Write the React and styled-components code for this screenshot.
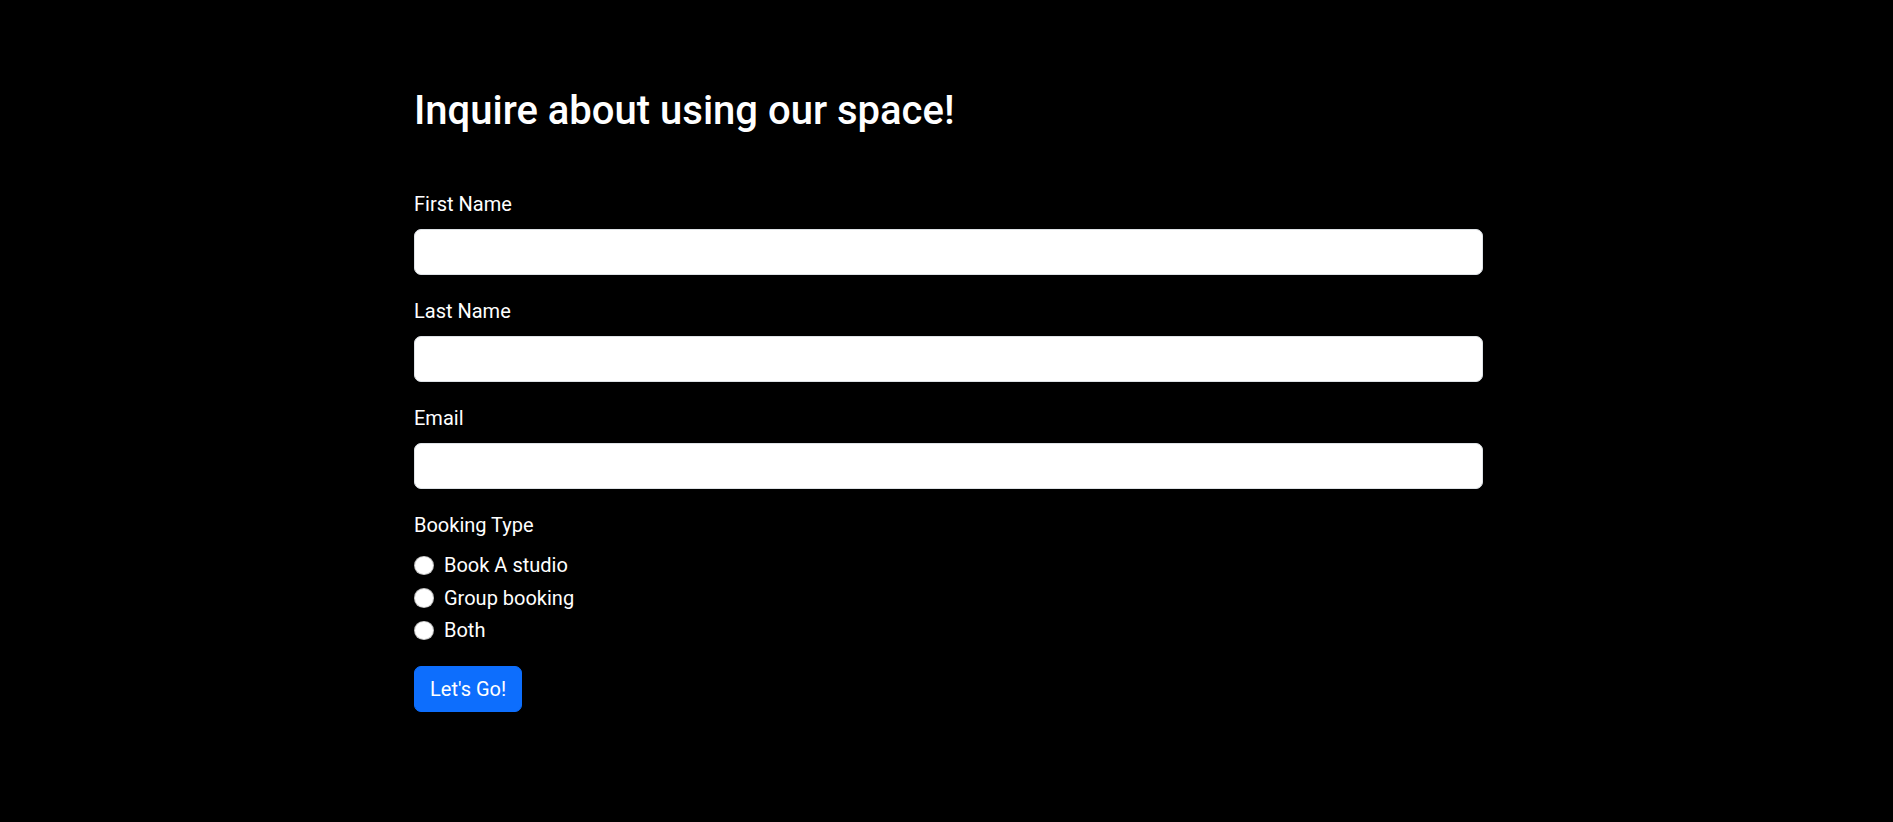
import React from "react";
import styled, { createGlobalStyle } from "styled-components";

const Global = createGlobalStyle`
  html, body { margin: 0; padding: 0; background: #000; }
  body { font-family: Roboto, "Noto Sans", "Liberation Sans", sans-serif; color: #fff; }
  * { box-sizing: border-box; }
`;

const Page = styled.div`
  min-height: 822px;
  background: #000;
`;

const Wrapper = styled.main`
  width: 1073px;
  margin: 0 auto;
  padding: 87px 0 0 4px;
`;

const Title = styled.h2`
  margin: 0 0 54px;
  font-size: 40px;
  line-height: 48px;
  font-weight: 500;
  color: #fff;
`;

const Form = styled.form`
  display: flex;
  flex-direction: column;
`;

const Group = styled.div`
  display: flex;
  flex-direction: column;
  margin-bottom: ${(p) => p.$mb || 21}px;
`;

const Label = styled.label`
  font-size: 20px;
  line-height: 30px;
  margin-bottom: 10px;
  color: #fff;
`;

const Input = styled.input`
  display: block;
  width: 100%;
  height: 46px;
  padding: 7px 15px;
  font-size: 20px;
  font-family: inherit;
  color: #212529;
  background: #fff;
  border: 1px solid #dee2e6;
  border-radius: 7px;
  outline: none;
`;

const RadioList = styled.div`
  display: flex;
  flex-direction: column;
  gap: 2px;
`;

const RadioRow = styled.label`
  display: flex;
  align-items: center;
  height: 30.5px;
  font-size: 20px;
  color: #fff;
  cursor: pointer;
`;

const Radio = styled.input.attrs({ type: "radio" })`
  appearance: none;
  width: 19.5px;
  height: 19.5px;
  margin: 0 10.5px 0 0;
  border-radius: 50%;
  background: #fff;
  border: 1px solid rgba(0, 0, 0, 0.25);
  flex-shrink: 0;
`;

const Button = styled.button`
  align-self: flex-start;
  height: 46px;
  padding: 0 15px;
  font-family: inherit;
  font-size: 20px;
  color: #fff;
  background: #0d6efd;
  border: 1px solid #0d6efd;
  border-radius: 7px;
  cursor: pointer;
`;

const fields = [
  { id: "first", label: "First Name", type: "text" },
  { id: "last", label: "Last Name", type: "text" },
  { id: "email", label: "Email", type: "email" },
];

const options = ["Book A studio", "Group booking", "Both"];

export default function App() {
  return (
    <Page>
      <Global />
      <Wrapper>
        <Title>Inquire about using our space!</Title>
        <Form onSubmit={(e) => e.preventDefault()}>
          {fields.map((f) => (
            <Group key={f.id}>
              <Label htmlFor={f.id}>{f.label}</Label>
              <Input id={f.id} type={f.type} />
            </Group>
          ))}
          <Group $mb={20}>
            <Label>Booking Type</Label>
            <RadioList>
              {options.map((o) => (
                <RadioRow key={o}>
                  <Radio name="booking" value={o} />
                  {o}
                </RadioRow>
              ))}
            </RadioList>
          </Group>
          <Button type="submit">Let's Go!</Button>
        </Form>
      </Wrapper>
    </Page>
  );
}
